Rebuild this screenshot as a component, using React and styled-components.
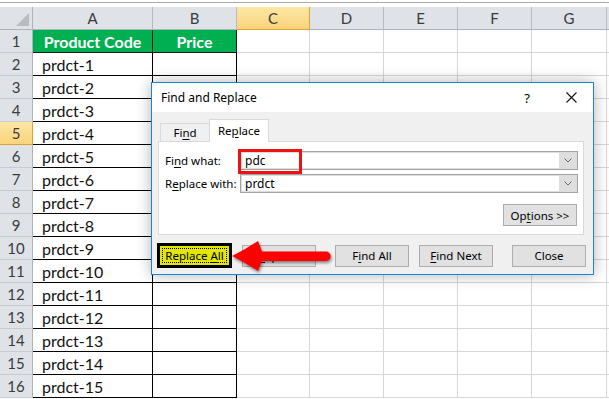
import React from "react";
import styled, { createGlobalStyle, css } from "styled-components";

const GlobalStyle = createGlobalStyle`
  html, body {
    margin: 0;
    padding: 0;
    background: #fff;
    overflow: hidden;
  }
`;

const Page = styled.div`
  position: relative;
  width: 609px;
  height: 399px;
  overflow: hidden;
  background: #fff;
  font-family: Lato, "Open Sans", sans-serif;
`;

const TopStrip = styled.div`
  height: 7px;
  background: linear-gradient(#fff 0 2px, #a9a9a9 2px 3px, #fff 3px);
`;

const Sheet = styled.div`
  display: grid;
  grid-template-columns: 33px 120px 84px 73px 74px 74px 74px 75px 1fr;
  grid-auto-rows: 23px;
`;

const hilite = css`
  background: linear-gradient(#fde7a6, #f9d47a);
  border-color: #e0a233;
`;

const Corner = styled.div`
  position: relative;
  background: #dfe3e8;
  border-right: 1px solid #abb3bc;
  border-bottom: 1px solid #abb3bc;
  box-sizing: border-box;

  &::after {
    content: "";
    position: absolute;
    right: 3px;
    bottom: 3px;
    border-left: 13px solid transparent;
    border-bottom: 13px solid #b9bcc0;
  }
`;

const ColHead = styled.div`
  display: flex;
  align-items: center;
  justify-content: center;
  box-sizing: border-box;
  background: #dfe3e8;
  border-right: 1px solid #b4bbc3;
  border-bottom: 1px solid #abb3bc;
  color: #3b3b3b;
  font-size: 15px;
  ${(p) => p.$active && hilite}
`;

const RowHead = styled.div`
  display: flex;
  align-items: center;
  justify-content: center;
  box-sizing: border-box;
  background: #dfe3e8;
  border-right: 1px solid #abb3bc;
  border-bottom: 1px solid #c7ccd2;
  color: #3b3b3b;
  font-size: 15px;
  ${(p) => p.$active && hilite}
`;

const Cell = styled.div`
  display: flex;
  align-items: center;
  box-sizing: border-box;
  padding-left: 9px;
  border-right: 1px solid #d6d6d6;
  border-bottom: 1px solid #d6d6d6;
  color: #111;
  font-size: 16px;
  white-space: nowrap;

  ${(p) =>
    p.$boxed &&
    css`
      border-color: #000;
    `}

  ${(p) =>
    p.$green &&
    css`
      justify-content: center;
      padding-left: 0;
      background: #00b050;
      color: #fff;
      font-weight: 700;
      border-color: #1a1a1a;
    `}
`;

/* dialog */

const Dialog = styled.div`
  position: absolute;
  left: 151px;
  top: 82px;
  width: 443px;
  height: 193px;
  box-sizing: border-box;
  border: 1px solid #1883d7;
  background: #f0f0f0;
  box-shadow: 0 0 14px rgba(0, 0, 0, 0.3);
  display: flex;
  flex-direction: column;
  font-family: "Noto Sans", "Open Sans", sans-serif;
  font-size: 11.5px;
  color: #000;
`;

const TitleBar = styled.div`
  height: 29px;
  flex: none;
  display: flex;
  align-items: center;
  background: #fff;
  padding-left: 9px;
`;

const Title = styled.div`
  flex: 1;
  font-size: 12px;
`;

const TitleButton = styled.div`
  width: 44px;
  height: 29px;
  display: flex;
  align-items: center;
  justify-content: center;
  font-size: 13px;
`;

const Body = styled.div`
  flex: 1;
  display: flex;
  flex-direction: column;
  padding: 8px 9px 0 6px;
`;

const TabRow = styled.div`
  display: flex;
  align-items: flex-end;
  height: 21px;
  padding-left: 2px;
`;

const Tab = styled.div`
  box-sizing: border-box;
  display: flex;
  align-items: center;
  justify-content: center;
  width: ${(p) => p.$w}px;
  height: 18px;
  border: 1px solid #d9d9d9;
  border-bottom: none;
  background: #f0f0f0;

  ${(p) =>
    p.$selected &&
    css`
      position: relative;
      z-index: 1;
      height: 23px;
      margin-bottom: -1px;
      margin-left: -1px;
      background: #fff;
      padding-bottom: 2px;
    `}
`;

const Key = styled.span`
  text-decoration: underline;
  text-underline-offset: 2px;
`;

const Panel = styled.div`
  box-sizing: border-box;
  height: 94px;
  border: 1px solid #d9d9d9;
  background: #fff;
  padding: 9px 5px 0 6px;
  display: flex;
  flex-direction: column;
  gap: 4px;
`;

const FieldRow = styled.div`
  display: flex;
  align-items: center;
  height: 19px;
`;

const Label = styled.div`
  width: 75px;
  flex: none;
`;

const Combo = styled.div`
  position: relative;
  flex: 1;
  height: 19px;
  box-sizing: border-box;
  border: 1px solid #a3a3a3;
  box-shadow: inset 0 0 0 1px #dcdcdc;
  background: #fff;
  display: flex;
  align-items: center;
  padding-left: 4px;
  font-size: 12px;
`;

const ComboValue = styled.div`
  flex: 1;
`;

const DropButton = styled.div`
  width: 17px;
  align-self: stretch;
  margin: 1px;
  background: #dedede;
  display: flex;
  align-items: center;
  justify-content: center;
`;

const Highlight = styled.div`
  position: absolute;
  left: -3px;
  top: -3px;
  width: 64px;
  height: 25px;
  box-sizing: border-box;
  border: 3px solid #ee1111;
`;

const Button = styled.div`
  box-sizing: border-box;
  width: ${(p) => p.$w || 75}px;
  height: 22px;
  flex: none;
  display: flex;
  align-items: center;
  justify-content: center;
  background: #e1e1e1;
  border: 1px solid #adadad;
  margin-left: ${(p) => p.$gap || 0}px;
`;

const OptionsButton = styled(Button)`
  align-self: flex-end;
  margin-top: 7px;
  margin-right: 1px;
`;

const ButtonRow = styled.div`
  display: flex;
  align-items: center;
  height: 25px;
  margin-top: 8px;
  margin-left: -1px;
`;

const DefaultButton = styled.div`
  box-sizing: border-box;
  width: 75px;
  height: 25px;
  flex: none;
  border: 3px solid #000;
  background: #e3e600;
  padding: 2px;
  display: flex;
`;

const FocusRing = styled.div`
  flex: 1;
  border: 1px dotted #000;
  display: flex;
  align-items: center;
  justify-content: center;
`;

const Arrow = styled.svg`
  position: absolute;
  left: 225px;
  top: 234px;
  overflow: visible;
  filter: drop-shadow(1px 2px 1.5px rgba(0, 0, 0, 0.45));
`;

const Chevron = () => (
  <svg width="8" height="5" viewBox="0 0 8 5">
    <path d="M0.5 0.5 L4 4 L7.5 0.5" fill="none" stroke="#6b6b6b" strokeWidth="1" />
  </svg>
);

const columns = ["A", "B", "C", "D", "E", "F", "G", ""];

const App = () => {
  const rows = [];
  for (let r = 1; r <= 16; r++) {
    const code = r === 1 ? "Product Code" : `prdct-${r - 1}`;
    rows.push(
      <React.Fragment key={r}>
        <RowHead $active={r === 5}>{r}</RowHead>
        <Cell $boxed $green={r === 1}>{code}</Cell>
        <Cell $boxed $green={r === 1}>{r === 1 ? "Price" : ""}</Cell>
        {columns.slice(2).map((c, i) => (
          <Cell key={i} />
        ))}
      </React.Fragment>
    );
  }

  return (
    <Page>
      <GlobalStyle />
      <TopStrip />
      <Sheet>
        <Corner />
        {columns.map((c, i) => (
          <ColHead key={i} $active={c === "C"}>
            {c}
          </ColHead>
        ))}
        {rows}
      </Sheet>

      <Dialog>
        <TitleBar>
          <Title>Find and Replace</Title>
          <TitleButton>?</TitleButton>
          <TitleButton>
            <svg width="11" height="11" viewBox="0 0 11 11">
              <path d="M0.5 0.5 L10.5 10.5 M10.5 0.5 L0.5 10.5" stroke="#111" strokeWidth="1.1" />
            </svg>
          </TitleButton>
        </TitleBar>
        <Body>
          <TabRow>
            <Tab $w={50}>
              <span>
                Fi<Key>n</Key>d
              </span>
            </Tab>
            <Tab $w={60} $selected>
              <span>
                Re<Key>p</Key>lace
              </span>
            </Tab>
          </TabRow>
          <Panel>
            <FieldRow>
              <Label>
                Fi<Key>n</Key>d what:
              </Label>
              <Combo>
                <ComboValue>pdc</ComboValue>
                <DropButton>
                  <Chevron />
                </DropButton>
                <Highlight />
              </Combo>
            </FieldRow>
            <FieldRow>
              <Label>
                R<Key>e</Key>place with:
              </Label>
              <Combo>
                <ComboValue>prdct</ComboValue>
                <DropButton>
                  <Chevron />
                </DropButton>
              </Combo>
            </FieldRow>
            <OptionsButton $w={74}>
              <span>
                Op<Key>t</Key>ions &gt;&gt;
              </span>
            </OptionsButton>
          </Panel>
          <ButtonRow>
            <DefaultButton>
              <FocusRing>
                <span>
                  Replace <Key>A</Key>ll
                </span>
              </FocusRing>
            </DefaultButton>
            <Button $w={74} $gap={10}>
              <span>
                <Key>R</Key>eplace
              </span>
            </Button>
            <Button $w={74} $gap={19}>
              <span>
                F<Key>i</Key>nd All
              </span>
            </Button>
            <Button $w={74} $gap={10}>
              <span>
                <Key>F</Key>ind Next
              </span>
            </Button>
            <Button $w={74} $gap={19}>
              <span>Close</span>
            </Button>
          </ButtonRow>
        </Body>
      </Dialog>

      <Arrow width="115" height="45" viewBox="225 234 115 45">
        <path
          d="M232 256 Q246 249 258 241 L262 251.5 L326 251.5 A4.75 4.75 0 0 1 326 261 L262 261 L258 271 Q246 263 232 256 Z"
          fill="#ff0000"
        />
      </Arrow>
    </Page>
  );
};

export default App;
